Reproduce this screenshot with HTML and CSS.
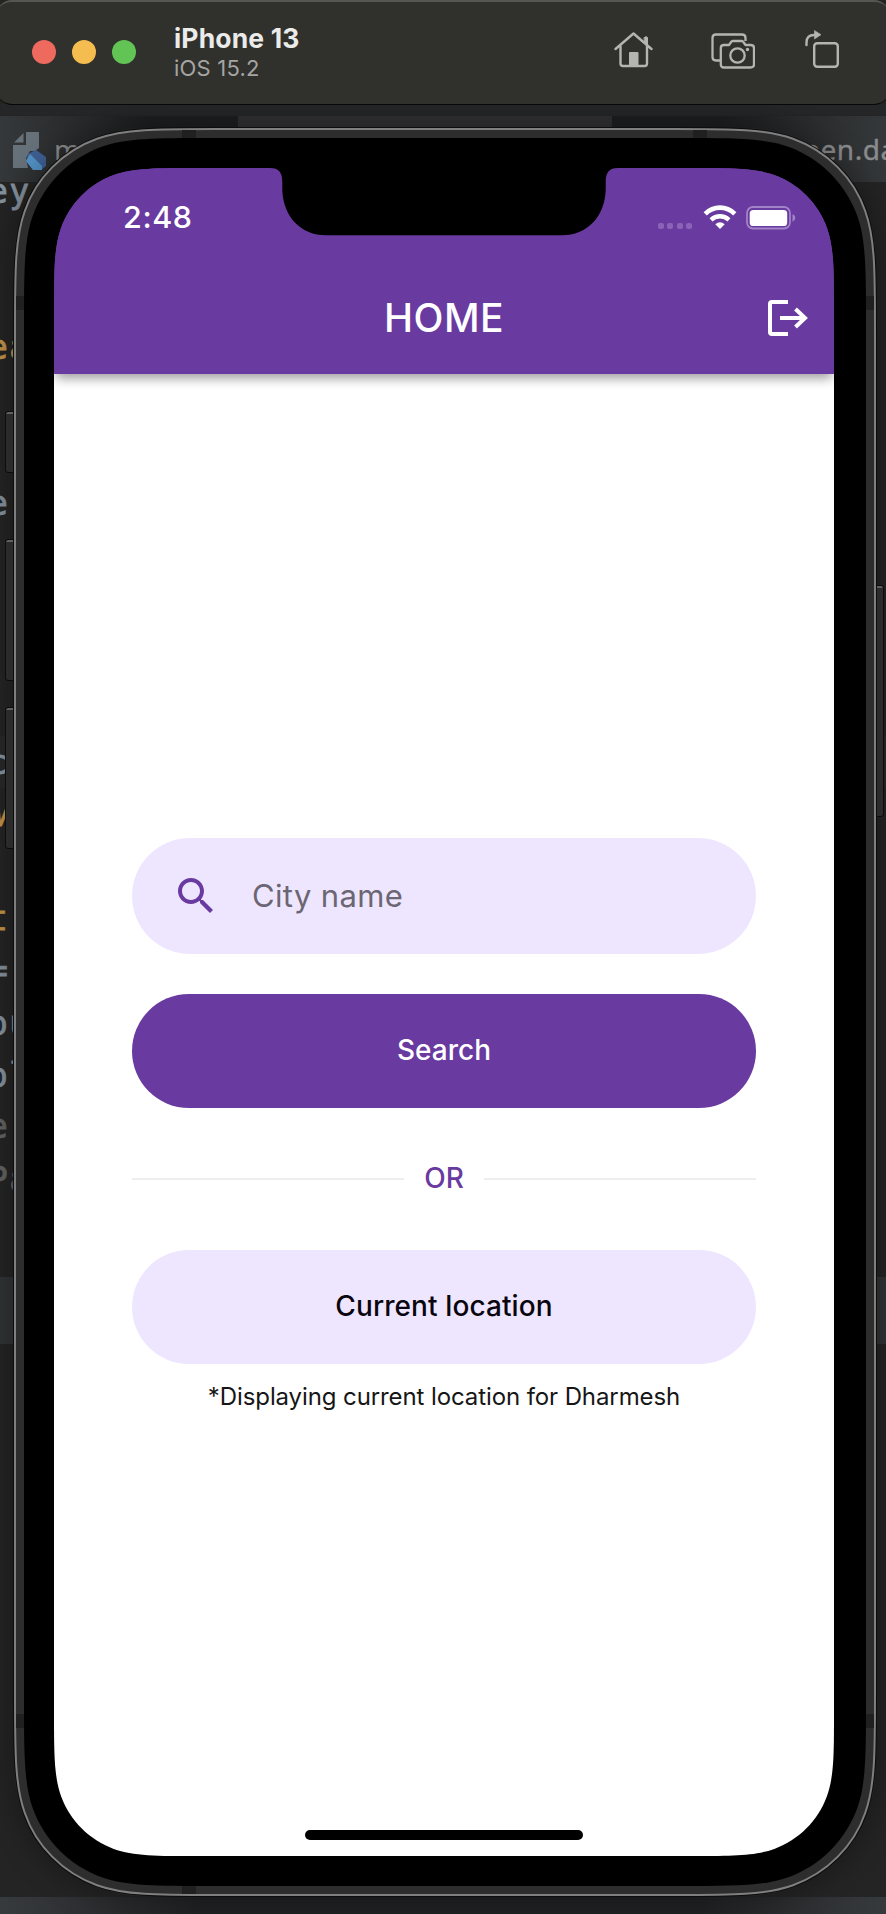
FILE: index.html
```html
<!DOCTYPE html>
<html lang="en">
<head>
<meta charset="utf-8">
<title>iPhone 13</title>
<link rel="stylesheet" href="styles.css">
</head>
<body>
<div class="desktop">
  <div class="editor" aria-hidden="true">
    <div class="strip"></div>
    <div class="tabs"></div>
    <div class="active-tab"></div>
    <div class="band line-band"></div>
    <div class="band panel-band"></div>
    <div class="band bottom-band"></div>
    <svg class="file-icon" width="36" height="40" viewBox="0 0 36 40">
      <path d="M13 0H26V16L22 19L17 19L13 26L15 36H0V13H13Z" fill="#66717a"/>
      <path d="M10.500 1V10.500H1Z" fill="#66717a"/>
      <path d="M15 22L23 18L33 25V34L28 38H20L13 29Z" fill="#3f5f93"/>
      <path d="M13 29L17 22L29 34V38H20Z" fill="#5291c4"/>
    </svg>
    <span class="tab-name tab-left">main</span>
    <span class="tab-name tab-right">een.dart</span>
    <span class="code l1">ey</span>
    <span class="code gold l2">ea</span>
    <span class="code l3">e</span>
    <span class="code l4">c</span>
    <span class="code gold italic l5">w</span>
    <span class="code gold l6">t(</span>
    <span class="code l7">=:</span>
    <span class="code l8">ou</span>
    <span class="code l9">ol</span>
    <span class="code dim l10">e:</span>
    <span class="code dim l11">Pa</span>
    <div class="glow"></div>
  </div>

  <header class="titlebar">
    <div class="lights"><i class="light red"></i><i class="light yellow"></i><i class="light green"></i></div>
    <div class="device">
      <div class="device-name">iPhone 13</div>
      <div class="device-os">iOS 15.2</div>
    </div>
    <div class="tools">
      <svg width="40" height="36" viewBox="0 0 40 36" fill="none" stroke="#b4b4b1" stroke-width="2.400" stroke-linecap="round" stroke-linejoin="round">
        <path d="M1.500 17L19.500 1.500L37.500 17M6.500 14V31.500Q6.500 34 9 34H30.500Q33 34 33 31.500V14M32 11V5.500"/>
        <path d="M30.500 5.500H33.500V13L30.500 10Z" fill="#b4b4b1" stroke-width="1"/>
        <path d="M16 21H23.500V34H16Z" fill="#b4b4b1" stroke-width="2"/>
      </svg>
      <svg width="44" height="36" viewBox="0 0 44 36" fill="none" stroke="#b4b4b1" stroke-width="2.300" stroke-linejoin="round">
        <path d="M9 27.500H5Q1.500 27.500 1.500 24V5Q1.500 1.500 5 1.500H31Q34.500 1.500 34.500 5V8"/>
        <path d="M13 12H18L20.500 8.500Q21 8 22 8H30.500Q31.500 8 32 8.500L34.500 12H39.500Q43 12 43 15V31.500Q43 34.500 39.500 34.500H13Q9.800 34.500 9.800 31.500V15Q9.800 12 13 12Z"/>
        <circle cx="26.500" cy="22.500" r="7.200"/>
        <circle cx="36.500" cy="16.500" r="1.700" fill="#b4b4b1" stroke="none"/>
      </svg>
      <svg width="34" height="38" viewBox="0 0 34 38" fill="none" stroke="#b4b4b1" stroke-width="2.400">
        <path d="M1.500 15V12.500Q1.500 5 9 5H10" stroke-linecap="round"/>
        <path d="M9.500 .5L16 4.700L9.500 9Z" fill="#b4b4b1" stroke-width=".6"/>
        <rect x="9.200" y="13.200" width="23.600" height="23.600" rx="3"/>
      </svg>
    </div>
  </header>

  <main class="phone">
    <i class="key k1"></i><i class="key k2"></i><i class="key k3"></i><i class="key k4"></i>
    <svg class="shell" width="862" height="1768" viewBox="0 0 862 1768">
      <defs>
        <path id="outer" d="M201 1H661C719 1 752 1 779 10.800C813 23 840 50 851.200 83C861 110 861 144 861 202V1566C861 1624 861 1658 851.200 1685C840 1718 813 1745 779 1757.200C752 1767 719 1767 661 1767H201C143 1767 110 1767 83 1757.200C49 1745 22 1718 10.800 1685C1 1658 1 1624 1 1566V202C1 144 1 110 10.800 83C22 50 49 23 83 10.800C110 1 143 1 201 1Z"/>
      </defs>
      <use href="#outer" fill="#2d2d2d" stroke="#0c0c0c" stroke-width="4"/>
      <use href="#outer" fill="#2d2d2d" stroke="#7f7f7f" stroke-width="2"/>
      <path fill="#202020" d="M168 2h14v10h-14zM679 2h14v10h-14zM168 1756h14v10h-14zM2 168h10v14H2zM850 168h10v14h-10zM2 1586h10v14H2zM850 1586h10v14h-10z"/>
      <path fill="#000" d="M196 10H665.500C719 10 750.500 10 775 19C806.500 30.600 831 55.500 843 87C852 111.500 852 143 852 196.500V1571.500C852 1625 852 1656.500 843 1681C831 1712.500 806.500 1737.400 775 1749C750.500 1758 719 1758 665.500 1758H196.500C143 1758 111.500 1758 87 1749C55.500 1737.400 30.600 1712.500 19 1681C10 1656.500 10 1625 10 1571.500V196.500C10 143 10 111.500 19 87C30.600 55.500 55.500 30.600 87 19C111.500 10 143 10 196 10Z"/>
    </svg>

    <div class="screen">
      <div class="top">
        <div class="status">
          <span class="time">2:48</span>
          <div class="indicators">
            <span class="dots"><i></i><i></i><i></i><i></i></span>
            <svg width="34" height="24" viewBox="0 0 34 24" fill="none" stroke="#fff">
              <path d="M2.200 8.800Q8.500 2.600 17 2.600T31.800 8.800" stroke-width="4.600"/>
              <path d="M8 14.800Q12 11.300 17 11.300T26 14.800" stroke-width="4.400"/>
              <path d="M12.300 19.200Q17 15.500 21.700 19.200L17 24Z" fill="#fff" stroke="none"/>
            </svg>
            <svg class="battery" width="50" height="24" viewBox="0 0 50 24">
              <rect x="1" y="1" width="43" height="21.500" rx="6" fill="none" stroke="#a183c7" stroke-width="1.800"/>
              <rect x="3.700" y="4" width="37.500" height="16" rx="3.600" fill="#fff"/>
              <path d="M46.500 8.300Q49.300 9.200 49.300 12T46.500 15.700Z" fill="#a183c7"/>
            </svg>
          </div>
        </div>
        <div class="appbar">
          <h1>HOME</h1>
          <svg class="logout" width="42" height="38" viewBox="0 0 42 38" fill="none" stroke="#fff" stroke-width="4">
            <path d="M21 3H5Q3 3 3 5V33Q3 35 5 35H21M13 19H39M28.500 10L38 19L28.500 28"/>
          </svg>
        </div>
        <svg class="notch" width="348" height="68" viewBox="0 0 348 68"><path d="M0 0C9 0 12.300 4.500 12.300 14V22C13.300 49 31 67.300 56 67.300H292C317 67.300 334.700 49 335.700 22V14C335.700 4.500 339 0 348 0Z"/></svg>
      </div>

      <div class="content">
        <div class="pill field">
          <svg width="48" height="48" viewBox="0 0 24 24" fill="#693a9f"><path d="M15.500 14h-.79l-.28-.27C15.410 12.590 16 11.110 16 9.500 16 5.910 13.090 3 9.500 3S3 5.910 3 9.500 5.910 16 9.500 16c1.610 0 3.090-.59 4.230-1.570l.27.280v.79l5 4.990L20.490 19l-4.990-5zm-6 0C7.010 14 5 11.990 5 9.500S7.010 5 9.500 5 14 7.010 14 9.500 11.990 14 9.500 14z"/></svg>
          <span class="placeholder">City name</span>
        </div>
        <div class="pill search"><span>Search</span></div>
        <div class="divider"><i></i><span>OR</span><i></i></div>
        <div class="pill current"><span>Current location</span></div>
        <p class="note">*Displaying current location for Dharmesh</p>
      </div>
      <div class="home-indicator"></div>
    </div>
  </main>
</div>
</body>
</html>
```
FILE: styles.css
```css
* { box-sizing: border-box; }
body { margin: 0; font-family: Inter, "Liberation Sans", sans-serif; background: #222; }
.desktop { position: relative; width: 886px; height: 1914px; overflow: hidden; background: #242424; }
.desktop i { display: block; }

/* Editor window behind the simulator */
.editor { position: absolute; inset: 0; }
.editor > * { position: absolute; }
.strip { left: 0; right: 0; top: 104px; height: 11px; background: #252628; }
.tabs { left: 0; right: 0; top: 116px; height: 66px; background: linear-gradient(90deg, #35383a, #1d1e1f 150px, #1d1e1f 720px, #35383a); }
.active-tab { left: 238px; top: 116px; width: 374px; height: 12px; background: #303032; }
.band { left: 0; right: 0; }
.line-band { top: 736px; height: 52px; background: #282828; }
.panel-band { top: 1277px; height: 67px; background: #303335; }
.bottom-band { top: 1897px; height: 17px; background: linear-gradient(90deg, #373a3d, #202123 200px, #202123 700px, #373a3d); }
.glow { left: 14px; top: 128px; width: 862px; height: 1768px; border-radius: 130px; box-shadow: 0 0 30px 4px rgba(0,0,0,.3); }
.file-icon { left: 13px; top: 132px; }
.tab-name { color: #8b8c8d; font: 28px/34px "Noto Sans", sans-serif; }
.tab-left { left: 54px; top: 132px; }
.tab-right { left: 804px; top: 132px; letter-spacing: .6px; -webkit-text-stroke: .4px; }
.code { left: -12px; font: 33px/40px "DejaVu Sans Mono", monospace; letter-spacing: 1.500px; color: #84919e; white-space: pre; -webkit-text-stroke: .8px; }
.gold { color: #bf9348; }
.dim { color: #626262; }
.italic { font-style: italic; }
.l1 { top: 172px; }
.l2 { top: 328px; }
.l3 { top: 484px; }
.l4 { top: 743px; }
.l5 { top: 795px; }
.l6 { top: 899px; }
.l7 { top: 951px; }
.l8 { top: 1004px; }
.l9 { top: 1056px; }
.l10 { top: 1107px; }
.l11 { top: 1160px; }

/* Simulator title bar */
.titlebar { position: relative; display: flex; align-items: flex-start; height: 105px; margin: 0 -4px; padding: 0 51px 0 36px; background: #30302d; border-top: 2px solid #555552; border-bottom: 1px solid #080808; border-radius: 16px; }
.lights { display: flex; gap: 16px; padding-top: 38px; }
.light { width: 24px; height: 24px; border-radius: 50%; }
.red { background: #ee6a5f; }
.yellow { background: #f5bd4f; }
.green { background: #61c454; }
.device { margin-left: 38px; padding-top: 20px; }
.device-name { color: #ebebea; font-size: 26.500px; line-height: 32px; font-weight: 700; letter-spacing: .15px; }
.device-os { margin-top: 1px; color: #a5a5a3; font-size: 22px; line-height: 26px; letter-spacing: .2px; }
.tools { display: flex; align-items: flex-start; margin-left: auto; padding-top: 30px; }
.tools svg:nth-child(1) { margin-right: 57px; }
.tools svg:nth-child(2) { margin: 1px 50px 0 0; }
.tools svg:nth-child(3) { margin-top: -2px; }

/* Device */
.phone { position: relative; width: 862px; height: 1768px; margin: 23px 0 0 14px; padding: 40px 42px 40px 40px; }
.shell { position: absolute; left: 0; top: 0; overflow: visible; }
.key { position: absolute; width: 9px; background: #2b2b2b; border-top: 2px solid #606060; outline: 1px solid #0c0c0c; border-radius: 2px; }
.k1 { left: -8px; top: 284px; height: 60px; }
.k2 { left: -8px; top: 412px; height: 140px; }
.k3 { left: -8px; top: 580px; height: 140px; }
.k4 { right: -7px; top: 458px; height: 230px; }
.screen { position: relative; display: flex; flex-direction: column; width: 780px; height: 1688px; background: linear-gradient(#693a9f 200px, #fff 200px); clip-path: path("M144.600 0H635.400C677 0 700.800 0 720.300 7.100C744.700 16 764 35.300 772.900 59.700C780 79.200 780 103 780 144.600V1543.400C780 1585 780 1608.800 772.900 1628.300C764 1652.700 744.700 1672 720.300 1680.900C700.800 1688 677 1688 635.400 1688H144.600C103 1688 79.200 1688 59.700 1680.900C35.300 1672 16 1652.700 7.100 1628.300C0 1608.800 0 1585 0 1543.400V144.600C0 103 0 79.200 7.100 59.700C16 35.300 35.300 16 59.700 7.100C79.200 0 103 0 144.600 0Z"); }
.top { position: relative; height: 206px; background: #693a9f; box-shadow: 0 6px 11px -2px rgba(0,0,0,.4); }
.notch { position: absolute; left: 216px; top: 0; }
.status { display: flex; justify-content: space-between; height: 94px; padding: 30px 38px 0 69px; color: #fff; }
.time { font-size: 30.500px; line-height: 38px; font-weight: 500; letter-spacing: .6px; }
.indicators { display: flex; align-items: flex-start; padding-top: 7px; }
.dots { display: flex; gap: 3.300px; margin: 18px 11px 0 0; }
.dots i { width: 6px; height: 6px; border-radius: 2px; background: #8a63b6; }
.battery { margin: 1px 0 0 9px; }
.appbar { display: grid; grid-template-columns: 1fr auto 1fr; align-items: center; height: 112px; padding: 0 25px; }
h1 { grid-column: 2; margin: 0; color: #fff; font-size: 39px; line-height: 48px; font-weight: 500; letter-spacing: .5px; }
.logout { justify-self: end; }
.content { display: flex; flex-direction: column; padding: 464px 78px 0; }
.pill { display: flex; align-items: center; justify-content: center; height: 114px; padding-bottom: 2px; border-radius: 57px; background: #eee6fe; font-size: 28px; font-weight: 500; }
.field { height: 116px; padding: 0 0 0 40px; border-radius: 58px; justify-content: flex-start; font-size: 31px; font-weight: 400; color: #6b6673; }
.placeholder { margin: 0 0 2px 32px; letter-spacing: .35px; }
.search { margin-top: 40px; background: #693a9f; color: #fff; }
.divider { display: flex; align-items: center; gap: 20px; height: 142px; color: #693a9f; font-size: 28px; font-weight: 500; }
.divider i { flex: 1; height: 2px; background: #eee; }
.divider span { padding-bottom: 2px; }
.current { color: #0a0610; letter-spacing: .1px; }
.note { margin: 17px 0 0; text-align: center; font-size: 24px; line-height: 32px; letter-spacing: -.1px; color: #161616; white-space: nowrap; }
.home-indicator { width: 278px; height: 10px; margin: auto auto 16px; border-radius: 5px; background: #000; }
```
